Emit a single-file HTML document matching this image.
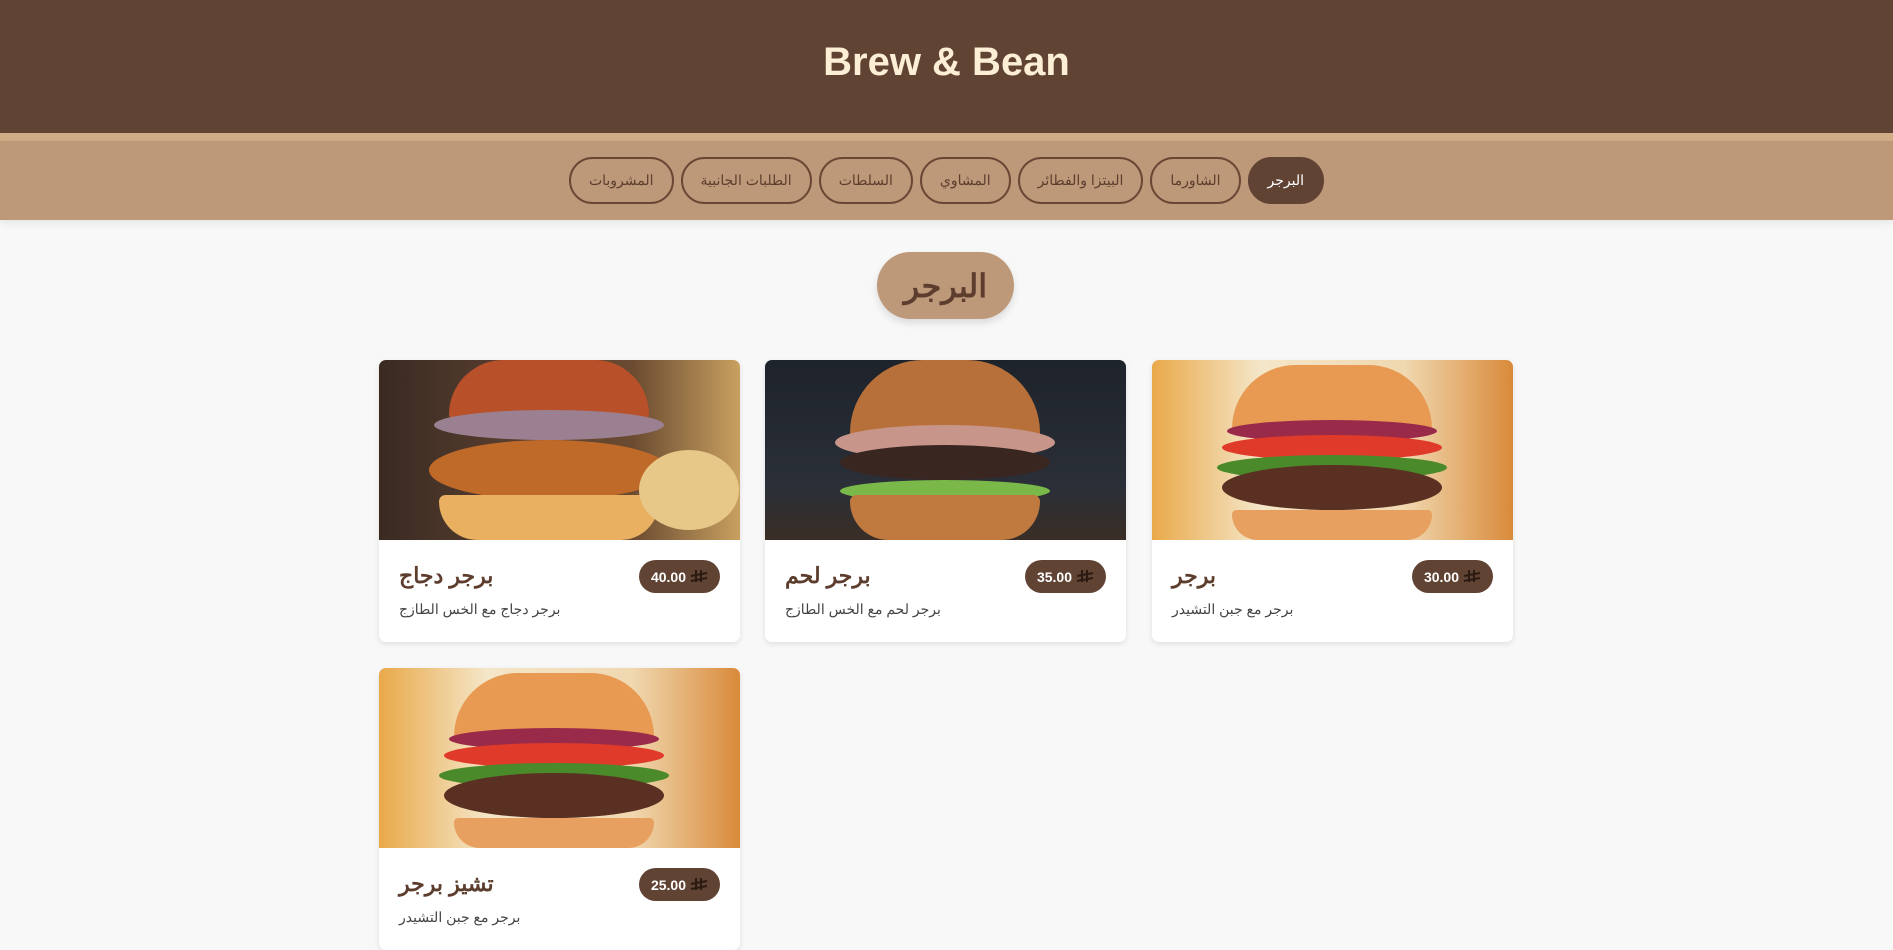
<!DOCTYPE html>
<html><head><meta charset="utf-8"><style>
*{box-sizing:border-box;margin:0;padding:0}
body{width:1893px;height:946px;overflow:hidden;background:#f8f8f8;font-family:"Liberation Sans","Noto Sans CJK SC",sans-serif;position:relative}
.hdr{height:133px;background:#614334;display:flex;align-items:center;justify-content:center}
.hdr h1{color:#fcefd6;font-size:40px;font-weight:bold;margin-top:-8px}
.strip{height:8px;background:#d1ad86}
.nav{height:79px;background:#bd9879;display:flex;flex-direction:row-reverse;justify-content:center;align-items:center;gap:7px;box-shadow:0 3px 8px rgba(0,0,0,.08)}
.nav div{height:47px;border:2px solid #6a4634;border-radius:24px;color:#5d3e2e;font-size:14px;display:flex;align-items:center;justify-content:center;padding:0 18px}
.nav .a{background:#614334;color:#fff;border-color:#614334}
.sec{position:absolute;left:877px;top:252px;width:137px;height:67px;border-radius:34px;background:#bd9879;color:#5d3e2e;font-size:32px;font-weight:bold;display:flex;align-items:center;justify-content:center;box-shadow:0 4px 8px rgba(0,0,0,.12)}
.card{position:absolute;width:361px;height:282px;background:#fff;border-radius:7px;overflow:hidden;box-shadow:0 2px 6px rgba(0,0,0,.1)}
.img{height:180px;position:relative;overflow:hidden}
.price{position:absolute;right:20px;top:200px;width:81px;height:33px;border-radius:17px;background:#614334;color:#fff;font-size:14px;font-weight:bold;display:flex;align-items:center;justify-content:center;gap:4px;flex-direction:row-reverse}
.t{position:absolute;left:20px;top:203px;font-size:22px;font-weight:bold;color:#5d3e2e}
.d{position:absolute;left:20px;top:241px;font-size:14px;color:#444}
.b{position:absolute;border-radius:50%}
</style></head><body>
<div class="hdr"><h1>Brew &amp; Bean</h1></div>
<div class="strip"></div>
<div class="nav"><div class="a">البرجر</div><div>الشاورما</div><div>البيتزا والفطائر</div><div>المشاوي</div><div>السلطات</div><div>الطلبات الجانبية</div><div>المشروبات</div></div>
<div class="sec">البرجر</div>

<div class="card" style="left:1152px;top:360px">
<div class="img" style="background:linear-gradient(90deg,#e9a94a,#f4e6c8 30%,#f0d8b0 70%,#d98a3a)">
<div class="b" style="left:80px;top:5px;width:200px;height:70px;background:#e89a52;border-radius:100px 100px 10px 10px"></div>
<div class="b" style="left:75px;top:60px;width:210px;height:22px;background:#9a2a4a"></div>
<div class="b" style="left:70px;top:75px;width:220px;height:25px;background:#e03a2a"></div>
<div class="b" style="left:65px;top:95px;width:230px;height:25px;background:#4a8a2a"></div>
<div class="b" style="left:70px;top:105px;width:220px;height:45px;background:#5a3022"></div>
<div class="b" style="left:80px;top:150px;width:200px;height:30px;background:#e8a060;border-radius:10px 10px 60px 60px"></div>
</div>
<div class="price"><svg width="18" height="16" viewBox="0 0 18 16"><path d="M6 1v12M11 1v12M1 7l16-3M1 12l16-3" stroke="#2a1a12" stroke-width="2" fill="none"/></svg>30.00</div><div class="t">برجر</div><div class="d">برجر مع جبن التشيدر</div></div>

<div class="card" style="left:765px;top:360px">
<div class="img" style="background:linear-gradient(180deg,#1e232b,#2a2f38 70%,#3a2e26)">
<div class="b" style="left:85px;top:0;width:190px;height:80px;background:#b8703a;border-radius:100px 100px 10px 10px"></div>
<div class="b" style="left:70px;top:65px;width:220px;height:35px;background:#c8958a"></div>
<div class="b" style="left:75px;top:85px;width:210px;height:35px;background:#3a2620"></div>
<div class="b" style="left:75px;top:120px;width:210px;height:22px;background:#7ab84a"></div>
<div class="b" style="left:85px;top:135px;width:190px;height:45px;background:#c07a40;border-radius:10px 10px 60px 60px"></div>
</div>
<div class="price"><svg width="18" height="16" viewBox="0 0 18 16"><path d="M6 1v12M11 1v12M1 7l16-3M1 12l16-3" stroke="#2a1a12" stroke-width="2" fill="none"/></svg>35.00</div><div class="t">برجر لحم</div><div class="d">برجر لحم مع الخس الطازج</div></div>

<div class="card" style="left:379px;top:360px">
<div class="img" style="background:linear-gradient(90deg,#3a2a22,#5a4030 40%,#6a4a30 70%,#c8a060)">
<div class="b" style="left:70px;top:0;width:200px;height:60px;background:#b8502a;border-radius:100px 100px 10px 10px"></div>
<div class="b" style="left:55px;top:50px;width:230px;height:30px;background:#9a8090"></div>
<div class="b" style="left:50px;top:80px;width:240px;height:60px;background:#c06a2a"></div>
<div class="b" style="left:60px;top:135px;width:220px;height:45px;background:#e8b060;border-radius:10px 10px 60px 60px"></div>
<div class="b" style="left:260px;top:90px;width:100px;height:80px;background:#e8c888"></div>
</div>
<div class="price"><svg width="18" height="16" viewBox="0 0 18 16"><path d="M6 1v12M11 1v12M1 7l16-3M1 12l16-3" stroke="#2a1a12" stroke-width="2" fill="none"/></svg>40.00</div><div class="t">برجر دجاج</div><div class="d">برجر دجاج مع الخس الطازج</div></div>

<div class="card" style="left:379px;top:668px">
<div class="img" style="background:linear-gradient(90deg,#e9a94a,#f4e6c8 30%,#f0d8b0 70%,#d98a3a)">
<div class="b" style="left:75px;top:5px;width:200px;height:70px;background:#e89a52;border-radius:100px 100px 10px 10px"></div>
<div class="b" style="left:70px;top:60px;width:210px;height:22px;background:#9a2a4a"></div>
<div class="b" style="left:65px;top:75px;width:220px;height:25px;background:#e03a2a"></div>
<div class="b" style="left:60px;top:95px;width:230px;height:25px;background:#4a8a2a"></div>
<div class="b" style="left:65px;top:105px;width:220px;height:45px;background:#5a3022"></div>
<div class="b" style="left:75px;top:150px;width:200px;height:30px;background:#e8a060;border-radius:10px 10px 60px 60px"></div>
</div>
<div class="price"><svg width="18" height="16" viewBox="0 0 18 16"><path d="M6 1v12M11 1v12M1 7l16-3M1 12l16-3" stroke="#2a1a12" stroke-width="2" fill="none"/></svg>25.00</div><div class="t">تشيز برجر</div><div class="d">برجر مع جبن التشيدر</div></div>
</body></html>
